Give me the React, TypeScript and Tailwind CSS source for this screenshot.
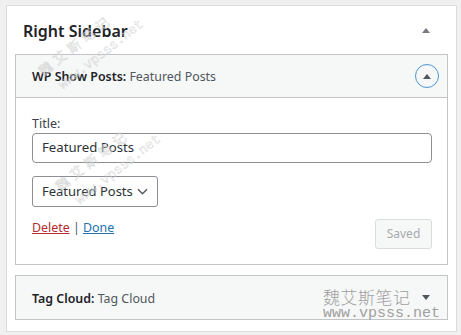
import React from "react";

const Up = ({ className = "" }: { className?: string }) => (
  <svg width="10" height="6" viewBox="0 0 10 6" className={className}>
    <path d="M1 6 L5 1 L9 6 Z" fill="currentColor" />
  </svg>
);
const Down = ({ className = "" }: { className?: string }) => (
  <svg width="10" height="6" viewBox="0 0 10 6" className={className}>
    <path d="M1 0 L5 5 L9 0 Z" fill="currentColor" />
  </svg>
);

const Watermark = ({ className }: { className: string }) => (
  <div className={"pointer-events-none absolute origin-top-left -rotate-[38deg] whitespace-nowrap " + className}>
    <div
      className="text-[13px] leading-[14px] tracking-[5px] text-transparent [-webkit-text-stroke:0.4px_#cfcfcf]"
      style={{ fontFamily: '"Noto Sans CJK SC", sans-serif' }}
    >
      魏艾斯笔记
    </div>
    <div
      className="mt-[10px] pl-[7px] text-[13.3px] leading-[14px] text-transparent [-webkit-text-stroke:0.4px_#cfcfcf]"
      style={{ fontFamily: '"Liberation Mono", monospace' }}
    >
      www.vpsss.net
    </div>
  </div>
);

export default function App() {
  return (
    <div
      className="relative h-[335px] w-[461px] overflow-hidden bg-[#f0f0f1] pl-[6px] pt-[5px] text-[13px] text-[#3c434a]"
      style={{ fontFamily: '"Noto Sans", "Open Sans", sans-serif' }}
    >
      <div className="flex h-[327px] w-[451px] flex-col border border-[#dcdcde] bg-white">
        <div className="flex h-[48px] items-center justify-between pl-4 pr-[25px]">
          <h2 className="pt-[1px] text-[16px] font-semibold text-[#1d2327]">Right Sidebar</h2>
          <Up className="text-[#787c82]" />
        </div>

        <div className="mx-2 border border-[#c3c4c7]">
          <div className="flex h-[43px] items-center justify-between border-b border-[#c3c4c7] bg-[#f6f7f7] pl-4 pr-[8px]">
            <div className="whitespace-nowrap pt-[3px] text-[12.4px] text-[#50575e]">
              <span className="font-semibold text-[#1d2327]">WP Show Posts:</span> Featured Posts
            </div>
            <div className="flex h-[24px] w-[24px] items-center justify-center rounded-full border border-[#4f94d4]">
              <Up className="text-[#50575e]" />
            </div>
          </div>
          <div className="flex flex-col pb-[15px] pl-4 pr-[15px] pt-[17px]">
            <label className="h-[18px] text-[12.5px] leading-[18px]">Title:</label>
            <div className="flex h-[30px] items-center rounded-[4px] border border-[#8c8f94] pl-[9px] text-[13.2px] text-[#2c3338]">
              Featured Posts
            </div>
            <div className="mt-[13px] flex h-[31px] w-[126px] items-center justify-between whitespace-nowrap rounded-[3px] border border-[#8c8f94] pl-[9px] pr-[9px] text-[13px] text-[#2c3338]">
              <span>Featured Posts</span>
              <svg width="11" height="7" viewBox="0 0 11 7">
                <path d="M1 1.2 L5.5 5.7 L10 1.2" fill="none" stroke="#50575e" strokeWidth="1.4" />
              </svg>
            </div>
            <div className="mt-[12px] flex items-start justify-between">
              <div className="h-[18px] whitespace-nowrap text-[12.4px] leading-[18px]">
                <a className="text-[#b32d2e] underline">Delete</a>
                <span className="text-[#50575e]"> | </span>
                <a className="text-[#2271b1] underline">Done</a>
              </div>
              <button className="flex h-[30px] w-[57px] items-center justify-center rounded-[3px] border border-[#dcdcde] bg-[#f6f7f7] text-[12px] text-[#a7aaad]">
                Saved
              </button>
            </div>
          </div>
        </div>

        <div className="mx-2 mt-[10px] flex h-[45px] items-center justify-between border border-[#c3c4c7] bg-[#f6f7f7] pl-4 pr-[16px]">
          <div className="whitespace-nowrap pt-[4px] text-[12.4px] text-[#50575e]">
            <span className="font-semibold text-[#1d2327]">Tag Cloud:</span> Tag Cloud
          </div>
          <Down className="text-[#50575e]" />
        </div>
      </div>

      <Watermark className="left-[36px] top-[67px]" />
      <Watermark className="left-[53px] top-[182px]" />

      <div className="pointer-events-none absolute left-[323px] top-[287px] flex flex-col">
        <div
          className="text-[17px] font-light leading-[20px] tracking-[0.5px] text-[#a0a0a0]"
          style={{ fontFamily: '"Noto Sans CJK SC", sans-serif' }}
        >
          魏艾斯笔记
        </div>
        <div
          className="text-[15px] leading-[14px] text-[#a0a0a0]"
          style={{ fontFamily: '"Liberation Mono", monospace' }}
        >
          www.vpsss.net
        </div>
      </div>
    </div>
  );
}
